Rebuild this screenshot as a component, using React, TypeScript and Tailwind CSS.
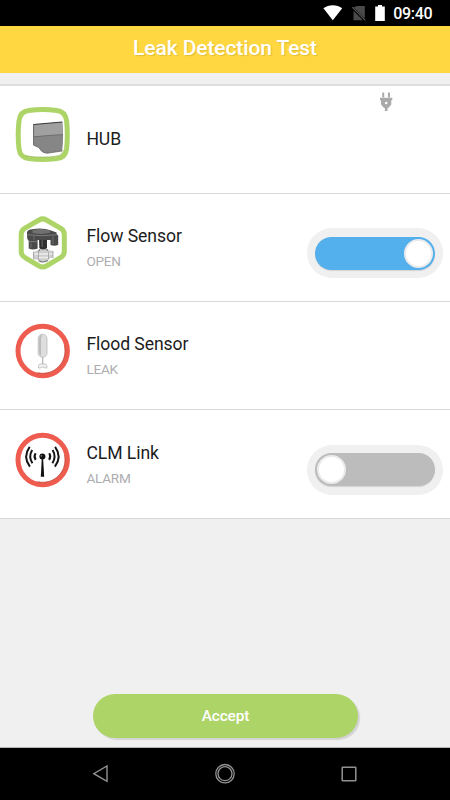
import React from 'react';

const StatusBar: React.FC = () => (
  <div className="h-[26px] bg-black flex items-center justify-end pr-[17px] text-white shrink-0">
    <svg className="w-[110px] h-[26px]" viewBox="323 0 110 26" fill="none">
      <path d="M323.4 8.3 C328.6 4.1 337 4.1 342.2 8.3 L332.8 20.2 Z" fill="#fff" />
      <path d="M357.4 6 H364.8 V18.6 L353.5 7.3 Z" fill="#4a4a4a" />
      <path d="M353.5 10.2 V20.2 H363 L353.5 10.7 Z" fill="#4a4a4a" />
      <path d="M352.2 7.2 L365.4 20.4" stroke="#5a5a5a" strokeWidth="1.1" />
      <path d="M378 5 H382 V6.5 H384.8 V21 H375.2 V6.5 H378 Z" fill="#fff" />
      <text x="393.3" y="19.4" fill="#fff" fontSize="16" fontWeight="500" fontFamily="Roboto, sans-serif" textLength="39.2">09:40</text>
    </svg>
  </div>
);

const HubIcon = () => (
  <svg className="w-[56px] h-[56px]" viewBox="0 0 56 56" fill="none">
    <path d="M14 3.7 Q28 1.7 42 3.7 Q50.6 4.7 51.8 14 Q53.2 28 51.8 42 Q50.6 50.8 42 51.8 Q28 53.8 14 51.8 Q5.2 50.8 4.2 42 Q2.6 28 4.2 14 Q5.2 4.7 14 3.7 Z" transform="translate(-0.2 -0.2)" fill="#fff" stroke="#add467" strokeWidth="5" />
    <path d="M10 48.9 Q28 51.2 42 49 Q47.6 48 48.2 43" stroke="#93b35c" strokeWidth="0.6" />
    <path d="M18.4 17.4 L47.2 14.9 Q49 28 47.2 44 L32 46.3 Q26.5 46.3 23.7 40.5 L18.6 38.2 Z" fill="#868686" />
    <path d="M18.4 17.4 L47.2 15.1 L48 27.6 L18.6 29.6 Z" fill="#a0a0a0" />
    <path d="M18.4 17.5 L47.4 15" stroke="#3a3a3a" strokeWidth="1.1" />
    <path d="M18.6 17.5 V38.2" stroke="#555" strokeWidth="0.8" />
    <path d="M18.6 29.8 Q33 28.4 48 27.6 M18.6 38.2 L23.7 40.5 Q27 46.3 32 46.3 L47 44" stroke="#606060" strokeWidth="0.7" />
  </svg>
);

const FlowIcon = () => (
  <svg className="w-[56px] h-[56px]" viewBox="0 0 56 56" fill="none">
    <path d="M24.1 5 Q27.7 2.8 31.3 5 L45.4 13.2 Q49.3 15.4 49.3 19.4 V36.5 Q49.3 40.5 45.4 42.6 L31.3 51 Q27.7 53 24.1 51 L10 42.6 Q6.2 40.5 6.2 36.5 V19.4 Q6.2 15.4 10 13.2 Z" fill="#fff" stroke="#add467" strokeWidth="5" strokeLinejoin="round" />
    <path d="M18 37 L24 35 H33 L38 36 V43 H35 L33 46 Q28.5 48.5 24 46 L22 44.5 H18 Z" fill="#cdcdcd" />
    <path d="M19.5 39 H37 M24 42.5 H33" stroke="#eeeeee" strokeWidth="1.6" />
    <path d="M18.5 36.8 V44 M38 36 V43 M23.5 37 V45 M33.5 37 V44" stroke="#a0a0a0" strokeWidth="0.8" />
    <path d="M23.5 36.5 L25.5 33.5 H30.5 L33 35.5 M23.7 45.8 Q28 48.3 32.8 45.6" stroke="#777" strokeWidth="1.1" />
    <path d="M24 22 H32 V32.5 L30 34.5 H26.3 L24.3 32.5 Z" fill="#303030" />
    <path d="M12 17 Q13 14.4 17 14.2 Q28 12.6 36 15.4 L41.6 17.4 V19 L43.2 20.5 V29.8 Q40 31.5 35.5 30 V25 H22.6 V33.5 Q18 35.6 13.7 33.6 V26 L12.2 23.5 Z" fill="#4a4a4a" />
    <path d="M17.5 15.2 Q27 12.6 35 15.8 V17.8 Q27 20 17.5 18 Z" fill="#707070" />
    <path d="M12.6 19.7 Q27 21.8 42 19.7 M14 26.6 H22.3" stroke="#808080" strokeWidth="0.9" />
    <path d="M16 27.5 V33 M38 21.5 V29 M19 20.8 V25 M27.2 25 V32" stroke="#707070" strokeWidth="0.9" />
  </svg>
);

const RedRing: React.FC<{ children: React.ReactNode }> = ({ children }) => (
  <svg className="w-[56px] h-[56px]" viewBox="0 0 56 56" fill="none">
    <circle cx="27.7" cy="28" r="24.7" fill="#fff" stroke="#ee5b4f" strokeWidth="5" />
    <path d="M49.4 22.8 A22.3 22.3 0 0 1 22.6 49.7" stroke="#b8483f" strokeWidth="0.7" />
    {children}
  </svg>
);

const FloodIcon = () => (
  <RedRing>
    <rect x="23.2" y="11.2" width="8.8" height="23.2" rx="4.4" fill="#dedede" stroke="#b4b4b4" strokeWidth="0.7" />
    <path d="M24 15 Q24.7 11.9 27.2 11.5 L26 15.5 V33 Q24 32 24 29 Z" fill="#bcbcbc" />
    <path d="M27.7 34.6 V41" stroke="#a9a9a9" strokeWidth="1.1" />
    <path d="M24.8 41 H30.7 L31.8 42.4 V45 H29.8 L29 44 H26.5 L25.6 45 H23.5 V42.4 Z" fill="#f2f2f2" stroke="#b8b8b8" strokeWidth="0.8" />
  </RedRing>
);

const AntennaIcon = () => (
  <RedRing>
    <circle cx="27.4" cy="24.6" r="3" fill="#111" />
    <path d="M26.8 26 H28.1 L29.2 44.8 H25.8 Z" fill="#111" />
    <circle cx="26.4" cy="23.9" r="0.8" fill="#888" />
    <path d="M20.6 21.3 Q18.4 24.6 20.7 27.9 M17.2 18 Q13.2 24.6 17.4 31.2 M14.7 14.8 Q7.5 24.6 14.9 34.6 M34.2 21.3 Q36.4 24.6 34.1 27.9 M37.6 18 Q41.6 24.6 37.4 31.2 M40.1 14.8 Q47.3 24.6 39.9 34.6" stroke="#151515" strokeWidth="2" />
  </RedRing>
);

const PlugIcon = () => (
  <svg className="w-[14px] h-[20px] absolute left-[379px] top-[6px]" viewBox="0 0 14 20" fill="none">
    <path d="M4.2 0.6 V5.4 M10 0.6 V5.4" stroke="#aaa" strokeWidth="2" />
    <path fillRule="evenodd" d="M1 5.7 H13.3 V8.2 H12.3 V12.5 L9.2 16 H8.5 V19 H5.9 V16 H5 L2 12.5 V8.2 H1 Z M7.2 9.7 A1.3 1.3 0 1 0 7.2 12.3 A1.3 1.3 0 1 0 7.2 9.7 Z" fill="#aaa" />
  </svg>
);

const Toggle: React.FC<{ on: boolean }> = ({ on }) => (
  <div className="w-[136px] h-[50px] rounded-full bg-[#f0f0f0] flex items-center justify-center ml-auto mr-[7px] mt-[34px]">
    <div className={`w-[120px] h-[33px] rounded-full flex items-center px-[2px] shadow-[0_1px_1px_rgba(0,0,0,0.12)] ${on ? 'bg-[#54b0ed] justify-end' : 'bg-[#bcbcbc] justify-start'}`}>
      <div className="w-[29px] h-[29px] rounded-full bg-white border-2 border-[#ebebeb]"></div>
    </div>
  </div>
);

interface DeviceRowProps {
  name: string;
  status?: string;
  icon: React.ReactNode;
  on?: boolean;
  plugged?: boolean;
  className: string;
}

const DeviceRow: React.FC<DeviceRowProps> = ({ name, status, icon, on, plugged, className }) => (
  <div className={`relative bg-white border-b border-[#d8d8d8] flex items-start pl-[15px] shrink-0 ${className}`}>
    <div className="mt-[21px] shrink-0">{icon}</div>
    <div className={`ml-[15.4px] ${status ? 'mt-[30px]' : 'mt-[41px]'}`}>
      <div className="text-[17.6px] leading-[25px] tracking-[-0.07px] text-[#1c1c1c] whitespace-nowrap">{name}</div>
      {status && <div className="text-[13.6px] leading-5 tracking-[-0.25px] mt-[2px] text-[#adadb0]">{status}</div>}
    </div>
    {on !== undefined && <Toggle on={on} />}
    {plugged && <PlugIcon />}
  </div>
);

const NavBar: React.FC = () => (
  <div className="h-[53px] bg-black border-t border-[#b5b5b5] flex items-center justify-between pl-[92px] pr-[93px] shrink-0">
    <svg className="w-[17px] h-[20px]" viewBox="0 0 17 20" fill="none">
      <path d="M15 2 V17.4 L1.8 9.7 Z" stroke="#929292" strokeWidth="1.4" />
    </svg>
    <svg className="w-[22px] h-[22px]" viewBox="0 0 22 22" fill="none">
      <circle cx="11" cy="10.7" r="9.2" stroke="#929292" strokeWidth="1.3" />
      <circle cx="11" cy="10.7" r="7" stroke="#929292" strokeWidth="1.3" />
    </svg>
    <svg className="w-[16px] h-[16px]" viewBox="0 0 16 16" fill="none">
      <rect x="1.2" y="1.2" width="13.6" height="13.6" rx="0.6" stroke="#929292" strokeWidth="1.5" />
    </svg>
  </div>
);

export default function App() {
  return (
    <div className="w-[450px] h-[800px] bg-[#f0f0f0] flex flex-col overflow-hidden font-[Roboto,sans-serif]">
      <StatusBar />
      <header className="h-[47px] bg-[#ffd740] flex items-center justify-center shrink-0">
        <h1 className="text-[21px] leading-6 tracking-[-0.1px] font-medium text-white pb-[3px] [text-shadow:1px_1px_1px_rgba(0,0,0,0.12)]">Leak Detection Test</h1>
      </header>
      <main className="flex-1 flex flex-col">
        <div className="mt-[11px] border-t-2 border-[#dedede] flex flex-col">
          <DeviceRow name="HUB" icon={<HubIcon />} plugged className="h-[108px]" />
          <DeviceRow name="Flow Sensor" status="OPEN" icon={<FlowIcon />} on={true} className="h-[108px]" />
          <DeviceRow name="Flood Sensor" status="LEAK" icon={<FloodIcon />} className="h-[108px]" />
          <DeviceRow name="CLM Link" status="ALARM" icon={<AntennaIcon />} on={false} className="h-[109px] pt-[0.6px]" />
        </div>
        <button className="w-[265px] h-[44px] mt-auto mb-[9px] ml-[93px] rounded-full bg-[#add467] text-white text-[15.4px] tracking-[-0.1px] font-medium pt-px shadow-[2px_2px_1px_rgba(0,0,0,0.12)]">Accept</button>
      </main>
      <NavBar />
    </div>
  );
}
